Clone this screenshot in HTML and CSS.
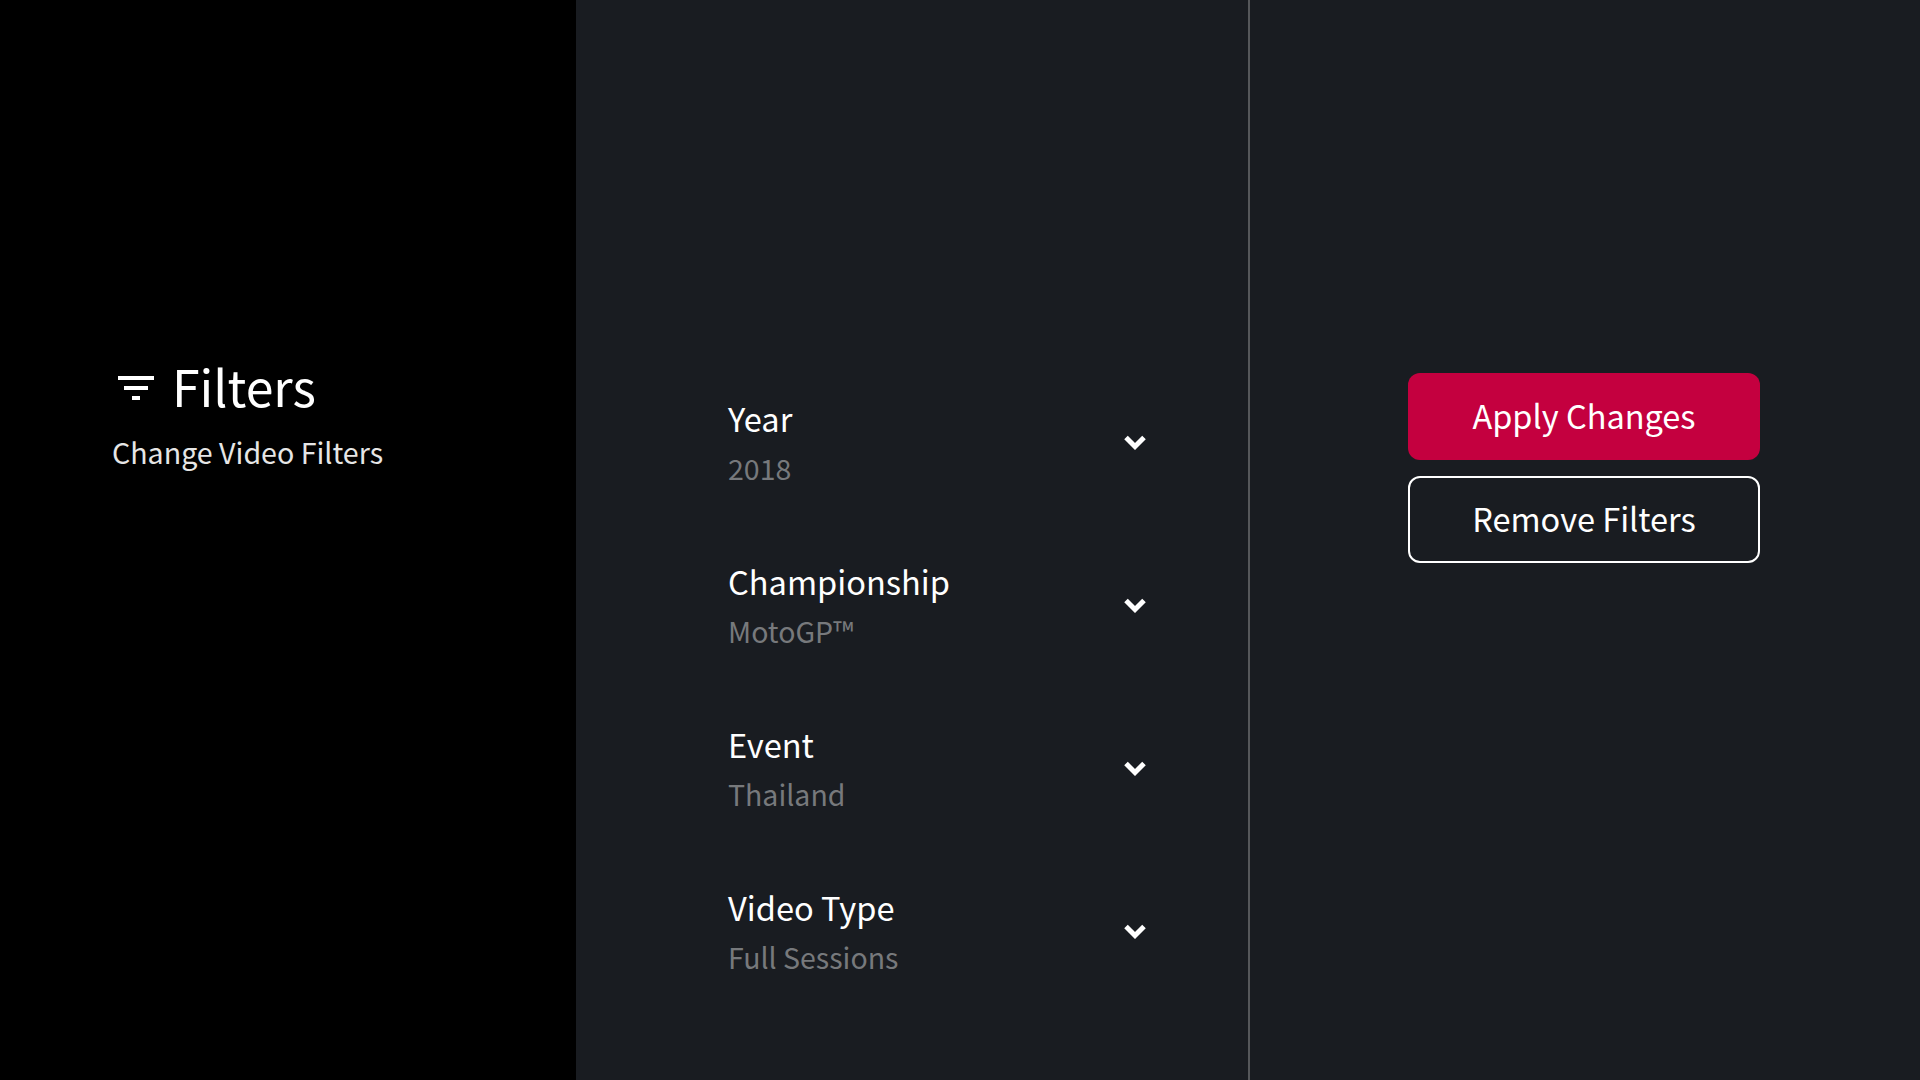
FILE: index.html
```html
<!DOCTYPE html>
<html lang="en">
<head>
  <meta charset="UTF-8">
  <title>Filters</title>
  <link rel="stylesheet" href="styles.css">
</head>
<body>
  <div class="screen">
    <aside class="side">
      <h1 class="side-title">
        <svg class="filter-icon" viewBox="0 0 36 24" width="36" height="24"><path d="M0 0h36v4H0zM6 10h24v4H6zM14 20h8v4h-8z" fill="#fff"/></svg>
        Filters
      </h1>
      <p class="side-sub">Change Video Filters</p>
    </aside>

    <section class="options">
      <div class="option">
        <div><div class="option-name">Year</div><div class="option-value">2018</div></div>
        <svg class="chevron" viewBox="0 0 22 15" width="22" height="15"><path d="M2 2.500 11 11.500l9-9" fill="none" stroke="#fff" stroke-width="5"/></svg>
      </div>
      <div class="option">
        <div><div class="option-name">Championship</div><div class="option-value">MotoGP™</div></div>
        <svg class="chevron" viewBox="0 0 22 15" width="22" height="15"><path d="M2 2.500 11 11.500l9-9" fill="none" stroke="#fff" stroke-width="5"/></svg>
      </div>
      <div class="option">
        <div><div class="option-name">Event</div><div class="option-value">Thailand</div></div>
        <svg class="chevron" viewBox="0 0 22 15" width="22" height="15"><path d="M2 2.500 11 11.500l9-9" fill="none" stroke="#fff" stroke-width="5"/></svg>
      </div>
      <div class="option">
        <div><div class="option-name">Video Type</div><div class="option-value">Full Sessions</div></div>
        <svg class="chevron" viewBox="0 0 22 15" width="22" height="15"><path d="M2 2.500 11 11.500l9-9" fill="none" stroke="#fff" stroke-width="5"/></svg>
      </div>
    </section>

    <section class="buttons">
      <button class="btn btn-apply">Apply Changes</button>
      <button class="btn btn-remove">Remove Filters</button>
    </section>
  </div>
</body>
</html>
```

FILE: styles.css
```css
body {
  margin: 0;
  background: #191c21;
  color: #fff;
  font-family: "Noto Sans CJK JP", "Noto Sans", sans-serif;
}

.screen {
  display: flex;
  width: 1920px;
  height: 1080px;
  overflow: hidden;
}

.side {
  width: 464px;
  padding: 350px 0 0 112px;
  background: #000;
}

.side-title {
  display: flex;
  align-items: center;
  gap: 18px;
  margin: 0 0 0 6px;
  height: 70px;
  font-size: 50px;
  font-weight: 400;
  line-height: 66px;
}

.filter-icon {
  margin-top: 6px;
}

.side-sub {
  margin: 10px 0 0;
  font-size: 28.600px;
  font-weight: 400;
  line-height: 44px;
  color: #e6e6e6;
}

.options {
  width: 672px;
  padding-top: 361px;
  border-right: 2px solid #55575a;
}

.option {
  display: flex;
  justify-content: space-between;
  align-items: center;
  box-sizing: border-box;
  width: 570px;
  height: 163px;
  padding: 0 0 0 152px;
}

.option-name {
  font-size: 32.600px;
  line-height: 48px;
}

.option-value {
  margin-top: 2px;
  font-size: 28.500px;
  line-height: 48px;
  color: #77797c;
}

.chevron {
  margin-top: -1px;
}

.buttons {
  display: flex;
  flex-direction: column;
  gap: 16px;
  padding: 373px 0 0 158px;
}

.btn {
  box-sizing: border-box;
  width: 352px;
  height: 87px;
  padding: 0 0 4px;
  border-radius: 12px;
  color: #fff;
  font-family: inherit;
  font-size: 32.500px;
}

.btn-apply {
  border: none;
  background: #c4003f;
}

.btn-remove {
  border: 2px solid #fff;
  background: transparent;
}
```
